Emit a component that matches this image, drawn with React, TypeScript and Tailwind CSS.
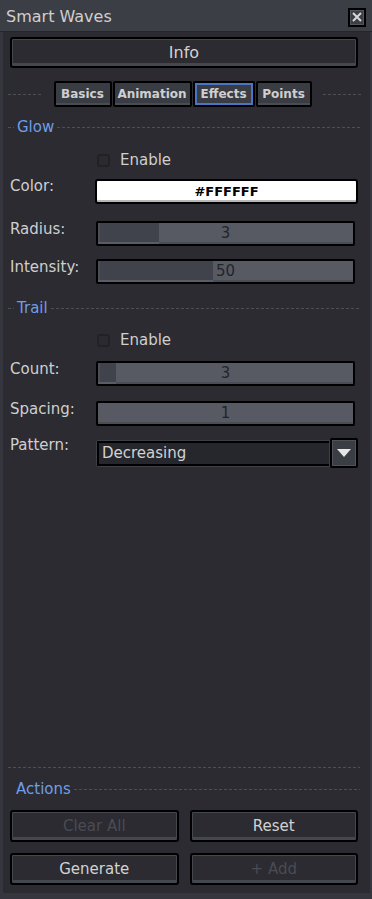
const font = { fontFamily: '"DejaVu Sans", "Liberation Sans", sans-serif' };

function Header({ title }: { title: string }) {
  return (
    <div className="flex items-center h-[20px] pl-[5px] pr-[10px]">
      <div className="w-[6px] h-px bg-[repeating-linear-gradient(90deg,#4d4f57_0_3px,transparent_3px_5px)]" />
      <span className="px-[3px] text-[15px] text-[#6f9ee6] leading-none">{title}</span>
      <div className="flex-1 h-px bg-[repeating-linear-gradient(90deg,#4d4f57_0_3px,transparent_3px_5px)]" />
    </div>
  );
}

function Enable() {
  return (
    <div className="flex items-center h-[20px] pl-[94px] gap-[10px]">
      <div className="w-[13px] h-[13px] rounded-[3px] border-2 border-[#222226] bg-[#2a2a2f]" />
      <span className="text-[15px] text-[#cfcfcf] leading-none">Enable</span>
    </div>
  );
}

function Slider({ label, value, pct }: { label: string; value: string; pct: number }) {
  return (
    <div className="flex items-start pl-[10px] pr-[15px]">
      <div className="w-[86px] pt-[1px] text-[15px] text-[#cfcfcf] leading-none h-[24px]">{label}</div>
      <div className="relative flex-1 h-[25px] border-2 border-black rounded-[2px] bg-[#575a63] shadow-[inset_0_-2px_0_#4a4d55] overflow-hidden">
        <div
          className="absolute left-0 top-0 bottom-0 bg-[#40434b] shadow-[inset_0_-2px_0_#5a5d65,inset_2px_0_0_#4a4d55]"
          style={{ width: `${pct}%` }}
        />
        <div className="absolute inset-0 flex items-center justify-center text-[15px] text-[#232429] leading-none">
          {value}
        </div>
      </div>
    </div>
  );
}

function Button({ label, disabled }: { label: string; disabled?: boolean }) {
  return (
    <div
      className={`flex-1 h-[32px] flex items-center justify-center rounded-[3px] border-2 border-black bg-[#2b2b31] shadow-[inset_0_0_0_1px_#45474f,inset_0_-3px_0_#45474f] text-[15px] leading-none ${
        disabled ? 'text-[#4a4c53]' : 'text-[#d2d2d2]'
      }`}
    >
      {label}
    </div>
  );
}

export default function App() {
  return (
    <div style={font} className="w-[372px] h-[899px] bg-black flex flex-col overflow-hidden">
      {/* Title bar */}
      <div className="h-[32px] bg-[#3c3e46] flex items-center justify-between pl-[6px] pr-[6px] border-b border-[#25262b]">
        <span className="text-[16px] text-[#cfcfcf] leading-none pt-[2px]">Smart Waves</span>
        <div className="w-[18px] h-[19px] mt-[3px] border-2 border-black bg-[#3c3e46] shadow-[inset_0_0_0_1px_#55575f] flex items-center justify-center">
          <svg width="10" height="10" viewBox="0 0 10 10">
            <path d="M1 1 L9 9 M9 1 L1 9" stroke="#d8d8d8" strokeWidth="2" />
          </svg>
        </div>
      </div>

      {/* Body */}
      <div className="flex-1 flex flex-col bg-[#2b2b31] border-l-[3px] border-r-[2px] border-b-[6px] border-[#36373e]">
        <div className="pt-[5px] pl-[7px] pr-[12px]">
          <div className="h-[31px] rounded-[3px] border-2 border-black bg-[#2b2b31] shadow-[inset_0_0_0_1px_#45474f,inset_0_-3px_0_#45474f] flex items-center justify-center text-[16px] text-[#d2d2d2] leading-none">
            Info
          </div>
        </div>

        {/* Tabs */}
        <div className="flex items-center mt-[13px] pl-[5px] pr-[7px] h-[26px]">
          <div className="w-[34px] h-px bg-[repeating-linear-gradient(90deg,#4d4f57_0_3px,transparent_3px_5px)]" />
          <div className="flex-1 flex justify-center">
            <div className="flex gap-[1px] text-[12px] font-bold text-[#cfcfcf] leading-none">
              {[
                { t: 'Basics', w: 'w-[58px]' },
                { t: 'Animation', w: 'w-[79px]' },
                { t: 'Effects', w: 'w-[62px]' },
                { t: 'Points', w: 'w-[56px]' },
              ].map((tab) => (
                <div
                  key={tab.t}
                  className={`${tab.w} h-[26px] flex items-center justify-center border-2 border-black rounded-[2px] bg-[#3a3c44] ${
                    tab.t === 'Effects'
                      ? 'shadow-[inset_0_0_0_2px_#4a74c4]'
                      : 'shadow-[inset_0_-2px_0_#4a4c54]'
                  }`}
                >
                  {tab.t}
                </div>
              ))}
            </div>
          </div>
          <div className="w-[40px] h-px bg-[repeating-linear-gradient(90deg,#4d4f57_0_3px,transparent_3px_5px)]" />
        </div>

        <div className="mt-[10px]">
          <Header title="Glow" />
        </div>
        <div className="mt-[13px]">
          <Enable />
        </div>

        {/* Color */}
        <div className="flex items-start pl-[7px] pr-[12px] mt-[9px]">
          <div className="w-[85px] pt-[0px] text-[15px] text-[#cfcfcf] leading-none">Color:</div>
          <div className="flex-1 h-[25px] rounded-[3px] border-2 border-black bg-white shadow-[inset_0_-2px_0_#b8b8b8] flex items-center justify-center text-[13px] font-bold text-black leading-none">
            #FFFFFF
          </div>
        </div>

        <div className="mt-[17px] -ml-[3px]">
          <Slider label="Radius:" value="3" pct={24} />
        </div>
        <div className="mt-[13px] -ml-[3px]">
          <Slider label="Intensity:" value="50" pct={45} />
        </div>

        <div className="mt-[14px]">
          <Header title="Trail" />
        </div>
        <div className="mt-[12px]">
          <Enable />
        </div>
        <div className="mt-[11px] -ml-[3px]">
          <Slider label="Count:" value="3" pct={7} />
        </div>
        <div className="mt-[15px] -ml-[3px]">
          <Slider label="Spacing:" value="1" pct={0} />
        </div>

        {/* Pattern */}
        <div className="flex items-start pl-[7px] pr-[12px] mt-[12px]">
          <div className="w-[86px] pt-[0px] text-[15px] text-[#cfcfcf] leading-none">Pattern:</div>
          <div className="flex-1 flex">
            <div className="flex-1 h-[27px] mt-[2px] rounded-l-[2px] border border-[#3d3f47] bg-[#26272c] flex items-center">
              <div className="h-[25px] w-full border-2 border-black border-r-0 flex items-center pl-[3px] text-[15px] text-[#d2d2d2] leading-none">
                Decreasing
              </div>
            </div>
            <div className="w-[28px] h-[30px] border-2 border-black rounded-[2px] bg-[#3b3d45] shadow-[inset_0_0_0_1px_#50525a] flex items-center justify-center">
              <svg width="14" height="8" viewBox="0 0 14 8">
                <path d="M0 0 H14 L7 8 Z" fill="#e6e6e6" />
              </svg>
            </div>
          </div>
        </div>

        <div className="flex-1" />

        {/* Actions */}
        <div className="mx-[5px] mr-[10px] h-px bg-[repeating-linear-gradient(90deg,#4d4f57_0_3px,transparent_3px_5px)]" />
        <div className="mt-[11px] flex items-center h-[20px] pl-[13px] pr-[10px]">
          <span className="text-[15px] text-[#6f9ee6] leading-none pr-[3px]">Actions</span>
          <div className="flex-1 h-px bg-[repeating-linear-gradient(90deg,#4d4f57_0_3px,transparent_3px_5px)]" />
        </div>
        <div className="mt-[11px] flex gap-[11px] pl-[7px] pr-[12px]">
          <Button label="Clear All" disabled />
          <Button label="Reset" />
        </div>
        <div className="mt-[11px] mb-[8px] flex gap-[11px] pl-[7px] pr-[12px]">
          <Button label="Generate" />
          <Button label="+ Add" disabled />
        </div>
      </div>
    </div>
  );
}
